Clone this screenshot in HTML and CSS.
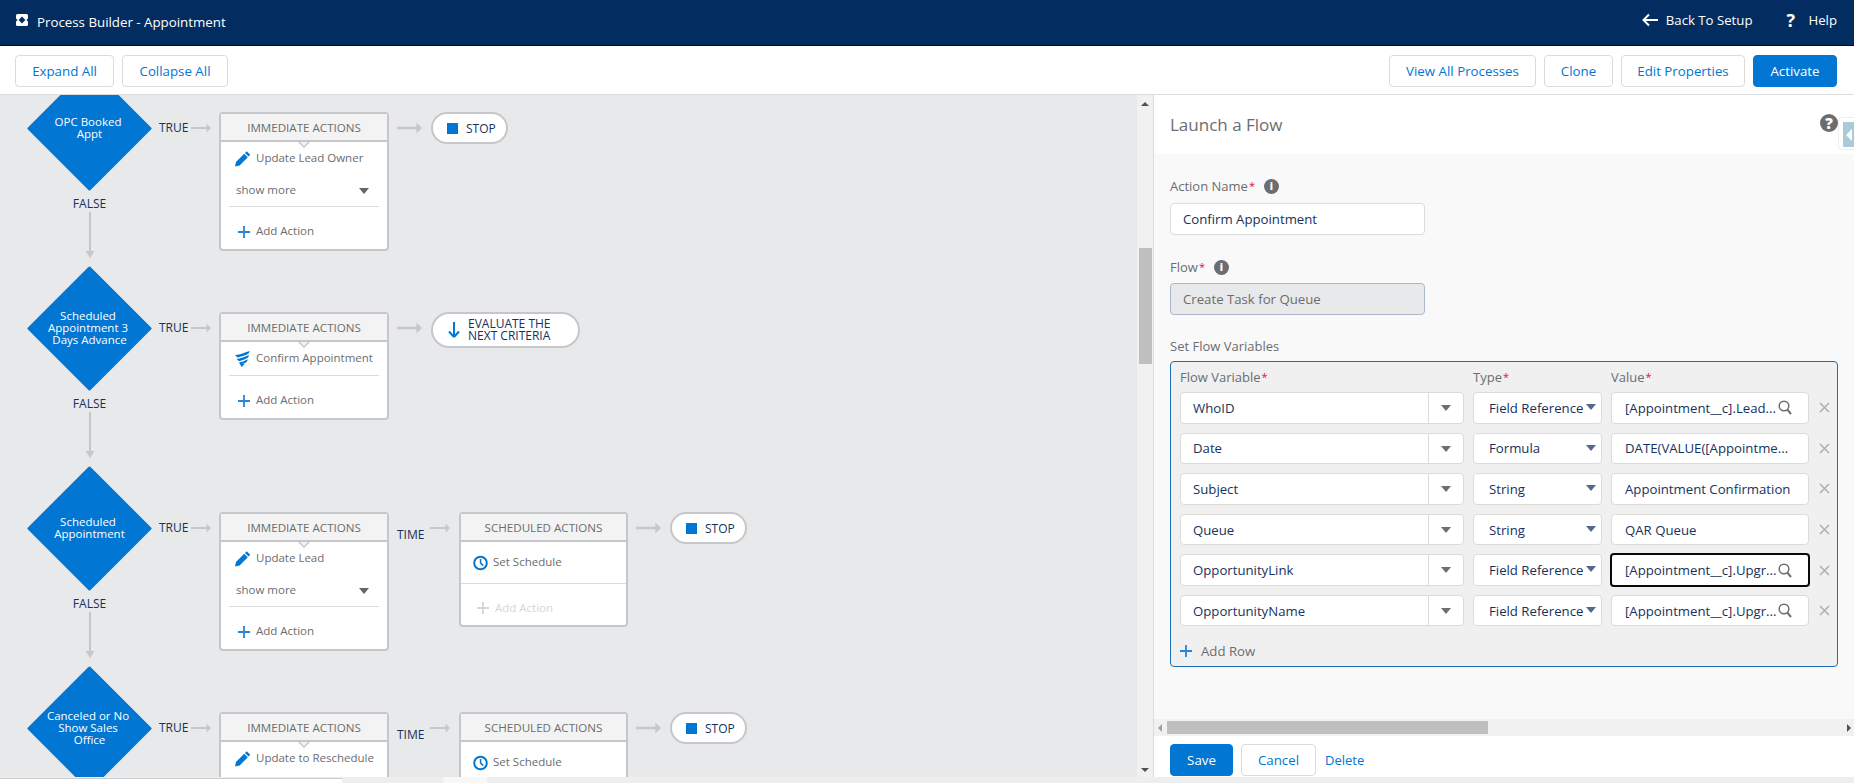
FILE: index.html
```html
<!DOCTYPE html>
<html lang="en">
<head>
<meta charset="utf-8">
<title>Process Builder - Appointment</title>
<link rel="stylesheet" href="styles.css">
</head>
<body>
<svg class="defs" aria-hidden="true">
  <symbol id="pencil" viewBox="0 0 15 15"><path d="M0 15l1-4.6L9.2 2.2l3.6 3.6L4.6 14z M10 1.4l1-1c.4-.4 1-.4 1.4 0l2.2 2.2c.4.4.4 1 0 1.4l-1 1z"/></symbol>
  <symbol id="flowi" viewBox="0 0 15 16"><path d="M0 4.2C3 3.6 7 3.4 10 1.6L14.6 0 13.6 2.6C10 4.8 6 6 2.6 6.4z M1.6 8C5 7.6 9 6.6 12.6 4.6L14.2 4.2 13 6.6C10.4 8.4 7 9.6 4 10.2z M4 11.6C7 11 9.6 10 11.8 8.8L13 8.6 11.6 11C10.4 12 9 12.6 7.4 13L9.6 13.2 6.6 16z"/></symbol>
  <symbol id="arrowr" viewBox="0 0 20 12" preserveAspectRatio="xMaxYMid slice"><path d="M-10 5h25.5V1.6L20 6l-4.5 4.4V7H-10z"/></symbol>
  <symbol id="arrowd" viewBox="0 0 12 46"><path d="M5 0h2v39h3.5L6 46 1.5 39H5z"/></symbol>
  <symbol id="plus" viewBox="0 0 12 12"><path d="M5.1 0h1.8v5.1H12v1.8H6.9V12H5.1V6.9H0V5.1h5.1z"/></symbol>
  <symbol id="clock" viewBox="0 0 15 15"><circle cx="7.5" cy="7.5" r="6.3" fill="none" stroke="currentColor" stroke-width="2"/><path d="M6.8 3.4h1.5v3.7l2.5 2.6-1.1 1L6.8 7.8z"/></symbol>
  <symbol id="search" viewBox="0 0 14 15"><circle cx="6" cy="6" r="4.8" fill="none" stroke="currentColor" stroke-width="1.5"/><path d="M9.4 9.6l3.6 4.4" fill="none" stroke="currentColor" stroke-width="2"/></symbol>
  <symbol id="cross" viewBox="0 0 11 11"><path d="M1 1l9 9M10 1l-9 9" fill="none" stroke="currentColor" stroke-width="1.6"/></symbol>
  <symbol id="diamond" viewBox="0 0 125 125"><path d="M62.5 2L123 62.5 62.5 123 2 62.5z" stroke="#0176d3" stroke-width="3" stroke-linejoin="round" fill="#0176d3"/></symbol>
</svg>

<div class="app">
  <header class="topbar">
    <div class="brand">
      <svg class="brand-icon" viewBox="0 0 12 12"><rect width="12" height="12" rx="1.5" fill="#fff"/><path d="M6 2.6L9.4 6 6 9.4 2.6 6z M0 4.6L1.6 6 0 7.4z M12 4.6L10.4 6 12 7.4z" fill="#032d60"/></svg>
      <span>Process Builder - Appointment</span>
    </div>
    <nav class="topnav">
      <a class="toplink"><svg class="back-icon" viewBox="0 0 16 14"><path d="M7 1.5L1.5 7 7 12.5M2 7h14" fill="none" stroke="#fff" stroke-width="2"/></svg>Back To Setup</a>
      <a class="toplink"><span class="help-q">?</span>Help</a>
    </nav>
  </header>

  <div class="toolbar">
    <div class="btn-group">
      <button class="btn btn-expand">Expand All</button>
      <button class="btn btn-collapse">Collapse All</button>
    </div>
    <div class="btn-group">
      <button class="btn btn-view">View All Processes</button>
      <button class="btn btn-clone">Clone</button>
      <button class="btn btn-edit">Edit Properties</button>
      <button class="btn btn-primary btn-activate">Activate</button>
    </div>
  </div>

  <main class="main">
    <section class="canvas">
      <div class="flow">

        <div class="crit-row">
          <div class="crit">
            <div class="diamond"><svg><use href="#diamond"/></svg><p class="diamond-text">OPC Booked&nbsp;<br>Appt</p></div>
            <span class="conn-label false-label">FALSE</span>
            <svg class="down"><use href="#arrowd"/></svg>
          </div>
          <div class="branch">
            <span class="conn-label true-label">TRUE</span>
            <svg class="arrow a-true"><use href="#arrowr"/></svg>
            <div class="card">
              <div class="card-head notched">IMMEDIATE ACTIONS</div>
              <div class="action"><svg class="ico"><use href="#pencil"/></svg>Update Lead Owner</div>
              <div class="more"><span>show more</span><i class="more-caret"></i></div>
              <div class="add"><svg class="plus"><use href="#plus"/></svg>Add Action</div>
            </div>
            <svg class="arrow a-next"><use href="#arrowr"/></svg>
            <div class="pill"><i class="stop"></i>STOP</div>
          </div>
        </div>

        <div class="crit-row">
          <div class="crit">
            <div class="diamond"><svg><use href="#diamond"/></svg><p class="diamond-text">Scheduled&nbsp;<br>Appointment 3&nbsp;<br>Days Advance</p></div>
            <span class="conn-label false-label">FALSE</span>
            <svg class="down"><use href="#arrowd"/></svg>
          </div>
          <div class="branch">
            <span class="conn-label true-label">TRUE</span>
            <svg class="arrow a-true"><use href="#arrowr"/></svg>
            <div class="card">
              <div class="card-head notched">IMMEDIATE ACTIONS</div>
              <div class="action"><svg class="ico"><use href="#flowi"/></svg>Confirm Appointment</div>
              <div class="add"><svg class="plus"><use href="#plus"/></svg>Add Action</div>
            </div>
            <svg class="arrow a-next"><use href="#arrowr"/></svg>
            <div class="pill pill-eval">
              <svg class="eval-icon" viewBox="0 0 12 16"><path d="M6 15L1 9.5M6 15l5-5.5M6 14V0" fill="none" stroke="#0176d3" stroke-width="2"/></svg>
              <span>EVALUATE THE<br>NEXT CRITERIA</span>
            </div>
          </div>
        </div>

        <div class="crit-row">
          <div class="crit">
            <div class="diamond"><svg><use href="#diamond"/></svg><p class="diamond-text">Scheduled&nbsp;<br>Appointment</p></div>
            <span class="conn-label false-label">FALSE</span>
            <svg class="down"><use href="#arrowd"/></svg>
          </div>
          <div class="branch">
            <span class="conn-label true-label">TRUE</span>
            <svg class="arrow a-true"><use href="#arrowr"/></svg>
            <div class="card">
              <div class="card-head notched">IMMEDIATE ACTIONS</div>
              <div class="action"><svg class="ico"><use href="#pencil"/></svg>Update Lead</div>
              <div class="more"><span>show more</span><i class="more-caret"></i></div>
              <div class="add"><svg class="plus"><use href="#plus"/></svg>Add Action</div>
            </div>
            <span class="conn-label time-label">TIME</span>
            <svg class="arrow a-time"><use href="#arrowr"/></svg>
            <div class="card card-sched">
              <div class="card-head">SCHEDULED ACTIONS</div>
              <div class="action action-sched"><svg class="ico"><use href="#clock"/></svg>Set Schedule</div>
              <div class="add add-off"><svg class="plus"><use href="#plus"/></svg>Add Action</div>
            </div>
            <svg class="arrow a-stop"><use href="#arrowr"/></svg>
            <div class="pill"><i class="stop"></i>STOP</div>
          </div>
        </div>

        <div class="crit-row">
          <div class="crit">
            <div class="diamond"><svg><use href="#diamond"/></svg><p class="diamond-text">Canceled or No&nbsp;<br>Show Sales&nbsp;<br>Office</p></div>
          </div>
          <div class="branch">
            <span class="conn-label true-label">TRUE</span>
            <svg class="arrow a-true"><use href="#arrowr"/></svg>
            <div class="card card-clipped">
              <div class="card-head notched">IMMEDIATE ACTIONS</div>
              <div class="action"><svg class="ico"><use href="#pencil"/></svg>Update to Reschedule</div>
            </div>
            <span class="conn-label time-label">TIME</span>
            <svg class="arrow a-time"><use href="#arrowr"/></svg>
            <div class="card card-sched card-clipped">
              <div class="card-head">SCHEDULED ACTIONS</div>
              <div class="action action-sched"><svg class="ico"><use href="#clock"/></svg>Set Schedule</div>
            </div>
            <svg class="arrow a-stop"><use href="#arrowr"/></svg>
            <div class="pill"><i class="stop"></i>STOP</div>
          </div>
        </div>

      </div>
    </section>

    <div class="vscroll">
      <i class="tri tri-up"></i>
      <div class="vthumb"></div>
      <i class="tri tri-down"></i>
    </div>

    <aside class="panel">
      <div class="panel-head">
        <h1 class="panel-title">Launch a Flow</h1>
        <span class="panel-help">?</span>
        <div class="side-tab"><i class="side-tab-inner"></i></div>
      </div>
      <div class="panel-body">
        <div class="label label-first">Action Name<b>*</b><i class="info">i</i></div>
        <div class="field field-name">Confirm Appointment</div>
        <div class="label label-flow">Flow<b>*</b><i class="info">i</i></div>
        <div class="field field-off">Create Task for Queue</div>
        <div class="label label-vars">Set Flow Variables</div>
        <div class="vars">
          <div class="vars-grid vars-head">
            <div class="label">Flow Variable<b>*</b></div>
            <div class="label">Type<b>*</b></div>
            <div class="label">Value<b>*</b></div>
          </div>
          <div class="vars-grid vars-rows">
            <div class="combo"><span>WhoID</span><i class="combo-btn"></i></div>
            <div class="select">Field Reference</div>
            <div class="value">[Appointment__c].Lead...<svg class="search"><use href="#search"/></svg></div>
            <svg class="rm"><use href="#cross"/></svg>

            <div class="combo"><span>Date</span><i class="combo-btn"></i></div>
            <div class="select">Formula</div>
            <div class="value">DATE(VALUE([Appointme...</div>
            <svg class="rm"><use href="#cross"/></svg>

            <div class="combo"><span>Subject</span><i class="combo-btn"></i></div>
            <div class="select">String</div>
            <div class="value">Appointment Confirmation</div>
            <svg class="rm"><use href="#cross"/></svg>

            <div class="combo"><span>Queue</span><i class="combo-btn"></i></div>
            <div class="select">String</div>
            <div class="value">QAR Queue</div>
            <svg class="rm"><use href="#cross"/></svg>

            <div class="combo"><span>OpportunityLink</span><i class="combo-btn"></i></div>
            <div class="select">Field Reference</div>
            <div class="value value-focus">[Appointment__c].Upgr...<svg class="search"><use href="#search"/></svg></div>
            <svg class="rm"><use href="#cross"/></svg>

            <div class="combo"><span>OpportunityName</span><i class="combo-btn"></i></div>
            <div class="select">Field Reference</div>
            <div class="value">[Appointment__c].Upgr...<svg class="search"><use href="#search"/></svg></div>
            <svg class="rm"><use href="#cross"/></svg>
          </div>
          <div class="add-row"><svg class="plus"><use href="#plus"/></svg>Add Row</div>
        </div>
      </div>
      <div class="hscroll">
        <i class="tri tri-left"></i>
        <div class="hthumb"></div>
        <i class="tri tri-right"></i>
      </div>
      <div class="panel-foot">
        <button class="btn btn-primary btn-save">Save</button>
        <button class="btn btn-cancel">Cancel</button>
        <a class="delete">Delete</a>
      </div>
    </aside>
  </main>

  <footer class="bottom">
    <i class="bottom-a"></i><i class="bottom-b"></i><i class="bottom-c"></i><i class="bottom-d"></i>
  </footer>
</div>
</body>
</html>
```

FILE: styles.css
```css
* { box-sizing: border-box; }
html, body { margin: 0; padding: 0; height: 100%; background: #fff; overflow: hidden; }
body { font-family: "Open Sans", "Liberation Sans", sans-serif; font-size: 13px; color: #16325c; }
i { font-style: normal; display: block; }
.defs { width: 0; height: 0; display: block; }
.app { width: 1854px; height: 783px; display: flex; flex-direction: column; }

/* top bar */
.topbar { height: 46px; flex: none; background: #032d60; border-bottom: 1px solid #0a0a0a; color: #fff; display: flex; justify-content: space-between; align-items: center; padding: 0 17px 2px 16px; }
.brand { display: flex; align-items: center; gap: 9px; font-size: 13.3px; }
.brand-icon { width: 12px; height: 12px; margin-top: -3px; }
.topnav { display: flex; gap: 34px; margin-top: -4px; }
.toplink { display: flex; align-items: center; font-size: 13.2px; color: #fff; }
.back-icon { width: 16px; height: 14px; margin-right: 8px; }
.help-q { font-size: 18px; font-weight: 700; width: 11px; margin-right: 11px; }

/* toolbar */
.toolbar { height: 49px; flex: none; display: flex; justify-content: space-between; padding: 9px 17px 0 15px; border-bottom: 1px solid #dcdcdc; }
.btn-group { display: flex; gap: 8px; }
.btn { height: 32px; padding: 0; background: #fff; border: 1px solid #dddbda; border-radius: 4px; color: #0176d3; font: 13.3px "Open Sans", "Liberation Sans", sans-serif; }
.btn-primary { background: #0176d3; border-color: #0176d3; color: #fff; }
.btn-expand { width: 99px; }
.btn-collapse { width: 106px; }
.btn-view { width: 147px; }
.btn-clone { width: 69px; }
.btn-edit { width: 124px; }
.btn-activate { width: 84px; }

/* main */
.main { height: 682px; flex: none; display: flex; }
.canvas { width: 1137px; flex: none; background: #e8e9eb; overflow: hidden; }
.flow { margin-top: -29px; padding-left: 27px; }
.crit-row { display: flex; height: 200px; }
.crit { width: 125px; flex: none; display: flex; flex-direction: column; align-items: center; }
.diamond { width: 125px; height: 125px; flex: none; display: grid; place-items: center; }
.diamond > svg { grid-area: 1 / 1; width: 125px; height: 125px; }
.diamond-text { grid-area: 1 / 1; margin: 0 0 2px; color: #fff; font-size: 11.5px; line-height: 12px; text-align: center; }
.conn-label { font-size: 12px; line-height: 14px; color: #16325c; }
.false-label { margin-top: 6px; }
.down { width: 12px; height: 46px; margin-top: 1px; fill: #c6c7ca; }
.branch { display: flex; align-items: flex-start; padding-top: 46px; margin-left: 7px; }
.true-label { margin-top: 9px; width: 32px; }
.arrow { width: 20px; height: 12px; margin-top: 10px; fill: #c6c7ca; flex: none; }
.a-true { margin-right: 8px; }
.a-next { width: 25px; margin-left: 8px; margin-right: 9px; }
.time-label { margin: 16px 7px 0 8px; width: 26px; }
.a-time { margin-right: 9px; }
.a-stop { width: 25px; margin-left: 8px; margin-right: 9px; }

/* cards */
.card { width: 170px; flex: none; background: #fff; border: 2px solid #c6c7ca; border-radius: 4px; color: #6b6d70; font-size: 11.5px; }
.card-clipped { height: 90px; }
.card-head { height: 26px; margin-bottom: 2px; line-height: 28px; text-align: center; background: #f3f3f3; box-shadow: 0 2px 0 #c6c7ca; position: relative; font-size: 11.6px; }
.notched::before { content: ""; position: absolute; left: 50%; top: 28px; margin-left: -6px; border: 6px solid transparent; border-top-color: #c6c7ca; border-bottom: 0; }
.notched::after { content: ""; position: absolute; left: 50%; top: 28px; margin-left: -4px; border: 4px solid transparent; border-top-color: #f3f3f3; border-bottom: 0; }
.action { height: 33px; display: flex; align-items: center; padding: 0 0 2px 14px; }
.ico { width: 15px; height: 16px; margin: 2px 6px 0 0; fill: #0176d3; color: #0176d3; flex: none; }
.more { height: 31px; display: flex; justify-content: space-between; align-items: center; padding: 0 18px 2px 15px; }
.more-caret { width: 0; height: 0; margin-top: 2px; border: 5px solid transparent; border-top: 6px solid #666; border-bottom: 0; }
.add { height: 43px; margin: 0 8px; padding: 5px 0 0 9px; border-top: 1px solid #dcdcdc; display: flex; align-items: center; }
.plus { width: 12px; height: 12px; margin: 2px 6px 0 0; fill: #2a85d8; flex: none; }
.card-sched { width: 169px; }
.action-sched { height: 42px; padding-left: 12px; border-bottom: 1px solid #dcdcdc; position: relative; }
.action-sched .ico { margin-right: 5px; }
.action-sched::after { content: ""; position: absolute; left: 50%; bottom: -6px; margin-left: -5px; border: 5px solid transparent; border-top-color: #fff; border-bottom: 0; }
.add-off { height: 41px; margin: 0; padding: 5px 0 0 16px; border-top: 0; color: #d5d6d8; }
.add-off .plus { fill: #d5d6d8; }

/* pills */
.pill { height: 32px; width: 77px; flex: none; display: flex; align-items: center; background: #fff; border: 2px solid #c6c7ca; border-radius: 16px; font-size: 12px; color: #16325c; padding-left: 14px; }
.stop { width: 11px; height: 11px; background: #0176d3; margin-right: 8px; }
.pill-eval { width: 149px; height: 36px; border-radius: 18px; line-height: 12px; padding-left: 15px; }
.eval-icon { width: 12px; height: 16px; margin-right: 8px; flex: none; }

/* canvas scrollbar */
.vscroll { width: 16px; flex: none; background: #f1f1f1; display: flex; flex-direction: column; align-items: center; padding: 7px 0 5px; }
.tri { width: 0; height: 0; border: 4px solid transparent; }
.tri-up { border-top: 0; border-bottom-color: #505050; }
.tri-down { margin-top: auto; border-bottom: 0; border-top-color: #505050; }
.vthumb { width: 13px; height: 116px; margin-top: 142px; background: #bfbfbf; }
.tri-left { border-left: 0; border-right-color: #a0a0a0; margin: 0 5px 0 4px; }
.tri-right { margin-left: auto; margin-right: 3px; border-right: 0; border-left-color: #505050; }

/* panel */
.panel { width: 701px; flex: none; border-left: 1px solid #dcdcdc; display: flex; flex-direction: column; background: #fff; }
.panel-head { height: 59px; flex: none; display: flex; align-items: center; padding: 0 0 0 16px; position: relative; }
.panel-title { margin: 0 0 1px; font-size: 17px; font-weight: 400; color: #6b6d70; flex: 1; }
.panel-help { width: 18px; height: 18px; margin: -4px 16px 0 0; border-radius: 50%; background: #6b6d70; color: #fff; font-size: 15px; font-weight: 800; line-height: 18px; text-align: center; }
.side-tab { position: absolute; right: 0; top: 22px; width: 16px; height: 33px; background: #fff; border: 1px solid #eee; border-right: 0; border-radius: 4px 0 0 4px; padding: 4px 0 0 4px; }
.side-tab-inner { width: 11px; height: 25px; background: #a9cbd8; position: relative; }
.side-tab-inner::after { content: ""; position: absolute; left: 3px; top: 7px; border: 6px solid transparent; border-left: 0; border-right-color: #fff; }
.panel-body { flex: 1; background: #f9f9f9; padding: 24px 0 0 16px; font-size: 13.2px; }
.label { display: flex; align-items: center; height: 16px; font-size: 13px; color: #6b6d70; }
.label b { color: #e3123c; font-size: 11px; font-weight: 400; margin: 1px 0 0 1px; align-self: flex-start; line-height: 14px; }
.info { width: 15px; height: 15px; margin-left: 9px; border-radius: 50%; background: #6b6d70; color: #fff; font-size: 10px; font-weight: 800; line-height: 15px; text-align: center; }
.field { width: 255px; height: 32px; margin-top: 9px; padding-left: 12px; line-height: 30px; background: #fff; border: 1px solid #dcdcdc; border-radius: 4px; color: #16325c; }
.label-flow { margin-top: 24px; }
.field-off { margin-top: 8px; background: #e8e9eb; border-color: #a8b8ca; color: #6b6d70; }
.label-vars { margin-top: 23px; }
.vars { width: 668px; height: 306px; margin-top: 7px; padding: 7px 0 0 9px; background: #f0f0f0; border: 1px solid #1b70b8; border-radius: 4px; }
.vars-grid { display: grid; grid-template-columns: 284px 129px 198px 22px; column-gap: 9px; }
.vars-rows { margin-top: 7px; row-gap: 9.1px; grid-auto-rows: 31.5px; }
.combo, .select, .value { display: flex; align-items: center; background: #fff; border: 1px solid #dddbda; border-radius: 4px; color: #16325c; white-space: nowrap; }
.combo { justify-content: space-between; padding-left: 12px; }
.combo-btn { width: 35px; height: 100%; border-left: 1px solid #dddbda; position: relative; }
.combo-btn::after { content: ""; position: absolute; left: 12px; top: 12px; border: 5px solid transparent; border-top: 6px solid #706e6b; border-bottom: 0; }
.select { padding-left: 15px; position: relative; }
.select::after { content: ""; position: absolute; right: 5px; top: 11px; border: 5px solid transparent; border-top: 6px solid #54698d; border-bottom: 0; }
.value { padding-left: 13px; }
.value-focus { border: 2px solid #0a0a0a; margin: -1px; padding-left: 13px; }
.search { width: 14px; height: 15px; margin-left: auto; margin-right: 16px; color: #6b6d70; flex: none; }
.rm { width: 11px; height: 11px; align-self: center; margin-left: 1px; color: #aeb0b3; }
.add-row { display: flex; align-items: center; height: 20px; margin-top: 15px; color: #6b6d70; }
.add-row .plus { margin: 0 9px 0 0; }

/* panel scrollbar and footer */
.hscroll { height: 17px; flex: none; background: #f1f1f1; display: flex; align-items: center; }
.hthumb { width: 321px; height: 13px; background: #bfbfbf; }
.panel-foot { height: 41px; flex: none; display: flex; align-items: flex-start; padding: 8px 0 0 16px; }
.btn-save { width: 63px; }
.btn-cancel { width: 75px; margin-left: 8px; }
.delete { margin-left: 9px; line-height: 32px; color: #0176d3; }

/* bottom strip */
.bottom { height: 6px; flex: none; display: flex; background: #eee; }
.bottom-a { width: 342px; background: #fff; border-top: 1px solid #ccc; margin-top: 1px; }
.bottom-b { width: 101px; }
.bottom-c { width: 44px; background: #f8f8f8; }
.bottom-d { flex: 1; }
```
